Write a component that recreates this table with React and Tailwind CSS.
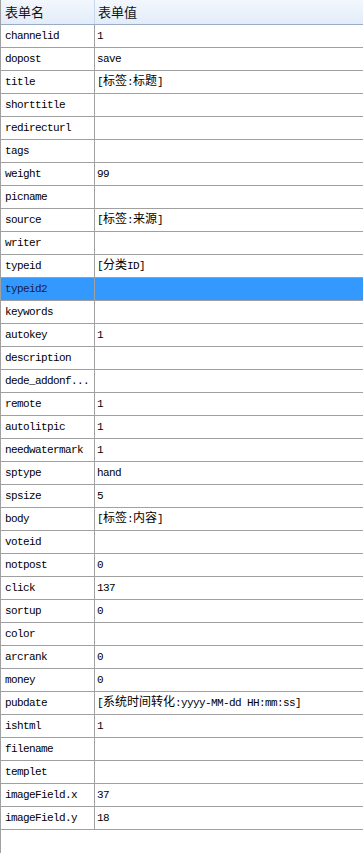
import React from 'react';

const rows = [
  ['channelid', '1'],
  ['dopost', 'save'],
  ['title', '[标签:标题]'],
  ['shorttitle', ''],
  ['redirecturl', ''],
  ['tags', ''],
  ['weight', '99'],
  ['picname', ''],
  ['source', '[标签:来源]'],
  ['writer', ''],
  ['typeid', '[分类ID]'],
  ['typeid2', '', true],
  ['keywords', ''],
  ['autokey', '1'],
  ['description', ''],
  ['dede_addonf...', ''],
  ['remote', '1'],
  ['autolitpic', '1'],
  ['needwatermark', '1'],
  ['sptype', 'hand'],
  ['spsize', '5'],
  ['body', '[标签:内容]'],
  ['voteid', ''],
  ['notpost', '0'],
  ['click', '137'],
  ['sortup', '0'],
  ['color', ''],
  ['arcrank', '0'],
  ['money', '0'],
  ['pubdate', '[系统时间转化:yyyy-MM-dd HH:mm:ss]'],
  ['ishtml', '1'],
  ['filename', ''],
  ['templet', ''],
  ['imageField.x', '37'],
  ['imageField.y', '18'],
];

const cellFont = {
  fontFamily: '"Liberation Mono", "Noto Sans CJK SC", monospace',
};

// CJK runs get their own size so they stay full-width like the original
function Mixed({ text }) {
  const parts = text.split(/([\u4e00-\u9fff]+)/).filter(Boolean);
  return parts.map((p, i) =>
    /[\u4e00-\u9fff]/.test(p) ? (
      <span key={i} className="text-[12px] tracking-[0px]">{p}</span>
    ) : (
      <span key={i}>{p}</span>
    )
  );
}

export default function App() {
  return (
    <div className="h-[853px] w-[363px] bg-white border-l border-[#a0a0a0] overflow-hidden">
      <div className="flex h-[25px] border-b border-[#98acc8] bg-gradient-to-b from-[#f3f7fd] to-[#e2ecf8] text-[13px] text-[#111] font-['Noto_Sans_CJK_SC',sans-serif]">
        <div className="w-[94px] border-r border-[#c8d6ea] flex items-center pl-[4px]">表单名</div>
        <div className="flex-1 flex items-center pl-[3px]">表单值</div>
      </div>
      {rows.map(([name, value, sel]) => (
        <div
          key={name}
          className={`flex h-[23px] border-b border-[#a0a0a0] text-[11px] tracking-[-0.6px] ${sel ? 'bg-[#3399ff] text-[#1a1a4a]' : 'text-black'}`}
          style={cellFont}
        >
          <div className="w-[94px] border-r border-[#a0a0a0] flex items-center pl-[4px] whitespace-nowrap overflow-hidden">
            {name}
          </div>
          <div className="flex-1 flex items-center pl-[2px] whitespace-nowrap overflow-hidden">
            <Mixed text={value} />
          </div>
        </div>
      ))}
    </div>
  );
}
